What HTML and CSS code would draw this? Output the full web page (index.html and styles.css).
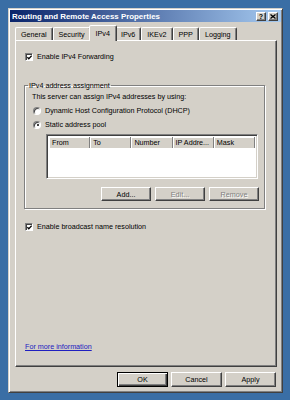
FILE: index.html
```html
<!DOCTYPE html>
<html lang="en">
<head>
    <meta charset="UTF-8">
    <title>Routing and Remote Access Properties</title>
    <link rel="stylesheet" href="styles.css">
</head>
<body>
    <div class="dialog">
        <div class="titlebar">
            <span class="title">Routing and Remote Access Properties</span>
            <span class="caption">
                <span class="cap-btn">?</span>
                <span class="cap-btn">
                    <svg width="6" height="5" viewBox="0 0 6 5"><path d="M0.5 0.5 L5.5 4.5 M5.5 0.5 L0.5 4.5" stroke="#000" stroke-width="1.3" fill="none"/></svg>
                </span>
            </span>
        </div>

        <div class="tabs">
            <span class="tab">General</span>
            <span class="tab">Security</span>
            <span class="tab active">IPv4</span>
            <span class="tab">IPv6</span>
            <span class="tab">IKEv2</span>
            <span class="tab">PPP</span>
            <span class="tab">Logging</span>
        </div>

        <div class="panel">
            <label class="check">
                <span class="box"><svg width="5" height="5" viewBox="0 0 5 5"><path d="M0.3 2.2 L1.8 3.8 L4.7 0.7" stroke="#000" stroke-width="1.3" fill="none"/></svg></span>
                Enable IPv4 Forwarding
            </label>

            <fieldset class="group">
                <legend>IPv4 address assignment</legend>
                <p class="hint">This server can assign IPv4 addresses by using:</p>
                <label class="radio"><span class="dot"></span>Dynamic Host Configuration Protocol (DHCP)</label>
                <label class="radio"><span class="dot on"></span>Static address pool</label>

                <div class="listview">
                    <div class="lv-head">
                        <span class="col">From</span>
                        <span class="col">To</span>
                        <span class="col">Number</span>
                        <span class="col">IP Addre...</span>
                        <span class="col">Mask</span>
                    </div>
                    <div class="lv-body"></div>
                </div>

                <div class="group-btns">
                    <button>Add...</button>
                    <button disabled>Edit...</button>
                    <button disabled>Remove</button>
                </div>
            </fieldset>

            <label class="check second">
                <span class="box"><svg width="5" height="5" viewBox="0 0 5 5"><path d="M0.3 2.2 L1.8 3.8 L4.7 0.7" stroke="#000" stroke-width="1.3" fill="none"/></svg></span>
                Enable broadcast name resolution
            </label>

            <a class="more" href="#">For more information</a>
        </div>

        <div class="footer">
            <button class="default">OK</button>
            <button>Cancel</button>
            <button>Apply</button>
        </div>
    </div>
</body>
</html>
```

FILE: styles.css
```css
* {
    box-sizing: border-box;
}

body {
    margin: 0;
    padding: 8px 0 0 8px;
    height: 400px;
    background-color: #3a6ea5;
    font-family: "Liberation Sans", Arial, sans-serif;
    font-size: 7.2px;
    color: #000;
}

.dialog {
    width: 275px;
    height: 385px;
    padding: 1px 1px 0;
    background-color: #d4d0c8;
    border: 1px solid;
    border-color: #d4d0c8 #404040 #404040 #d4d0c8;
    box-shadow: inset 1px 1px #fff, inset -1px -1px #808080;
    display: flex;
    flex-direction: column;
}

.titlebar {
    height: 12px;
    padding: 0 3px 0 2px;
    background: linear-gradient(to right, #0a246a, #a6caf0);
    color: #fff;
    font-weight: bold;
    font-size: 7.9px;
    display: flex;
    align-items: center;
    justify-content: space-between;
}

.caption {
    display: flex;
    gap: 2px;
    margin-top: 1px;
}

.cap-btn {
    width: 10px;
    height: 9px;
    background-color: #d4d0c8;
    border: 1px solid;
    border-color: #fff #404040 #404040 #fff;
    box-shadow: inset -1px -1px #808080;
    color: #000;
    font-size: 7px;
    display: flex;
    align-items: center;
    justify-content: center;
}

.tabs {
    height: 15px;
    margin-top: 3px;
    padding-left: 5px;
    display: flex;
    align-items: flex-end;
}

.tab {
    height: 13px;
    padding: 0 5px;
    border: 1px solid;
    border-bottom: none;
    border-color: #fff #404040 transparent #fff;
    border-radius: 2px 2px 0 0;
    box-shadow: inset -1px 0 #808080;
    display: flex;
    align-items: center;
}

.tab.active {
    height: 16px;
    margin: 0 -2px -1px;
    padding: 0 6px 1px;
    background-color: #d4d0c8;
    position: relative;
    z-index: 1;
}

.panel {
    height: 327px;
    margin: 0 4px 0 5px;
    padding: 11px 11px 15px 9px;
    border: 1px solid;
    border-color: #fff #404040 #404040 #fff;
    box-shadow: inset -1px -1px #808080;
    display: flex;
    flex-direction: column;
}

.check,
.radio {
    height: 9px;
    display: flex;
    align-items: center;
}

.box {
    width: 8px;
    height: 8px;
    margin-right: 4px;
    background-color: #fff;
    border: 1px solid;
    border-color: #808080 #fff #fff #808080;
    box-shadow: inset 1px 1px #404040;
    display: flex;
    align-items: center;
    justify-content: center;
    padding: 1px 0 0 1px;
}

.box svg {
    display: block;
}

.check.second {
    margin-top: 13px;
}

.group {
    margin: 20px 0 0 -1px;
    padding: 0 6px 7px 7px;
    min-width: 0;
    border: 1px solid #808080;
    box-shadow: 1px 1px #fff, inset 1px 1px #fff;
}

.group legend {
    margin-left: -4px;
    padding: 0 1px;
    line-height: 9px;
}

.hint {
    margin: 2px 0 0;
    line-height: 9px;
}

.radio {
    margin-top: 5px;
    padding-left: 1px;
}

.dot {
    width: 8px;
    height: 8px;
    margin-right: 4px;
    border-radius: 50%;
    background-color: #fff;
    border: 1px solid;
    border-color: #808080 #fff #fff #808080;
    box-shadow: inset 1px 1px #404040;
    display: flex;
    align-items: center;
    justify-content: center;
}

.dot.on::after {
    content: "";
    width: 2px;
    height: 2px;
    margin: 1px 0 0 1px;
    border-radius: 50%;
    background-color: #000;
}

.listview {
    height: 45px;
    margin: 5px 0 0 14px;
    border: 1px solid;
    border-color: #808080 #fff #fff #808080;
    box-shadow: inset 1px 1px #404040, inset -1px -1px #d4d0c8;
    background-color: #fff;
    padding: 2px;
    display: flex;
    flex-direction: column;
}

.lv-head {
    height: 11px;
    background-color: #d4d0c8;
    display: flex;
}

.col {
    width: 42px;
    padding-left: 3px;
    line-height: 11px;
    white-space: nowrap;
    overflow: hidden;
    border-right: 1px solid #808080;
    box-shadow: inset 1px 1px #fff;
}

.lv-body {
    flex: 1;
}

button {
    width: 50px;
    height: 14px;
    padding: 0;
    background-color: #d4d0c8;
    border: 1px solid;
    border-color: #fff #404040 #404040 #fff;
    box-shadow: inset -1px -1px #808080;
    font-family: inherit;
    font-size: inherit;
    color: #000;
}

button:disabled {
    color: #808080;
    text-shadow: 1px 1px #fff;
}

.group-btns {
    margin: 8px -1px 0 0;
    display: flex;
    justify-content: flex-end;
    gap: 4px;
}

.more {
    margin-top: auto;
    align-self: flex-start;
    color: #2020c0;
    line-height: 9px;
}

.footer {
    padding: 5px 5px 0 0;
    display: flex;
    justify-content: flex-end;
    gap: 3px;
}

.footer button {
    width: 51px;
    height: 15px;
}

.footer button.default {
    border-color: #000;
    box-shadow: inset 1px 1px #fff, inset -1px -1px #404040, inset -2px -2px #808080;
}
```
